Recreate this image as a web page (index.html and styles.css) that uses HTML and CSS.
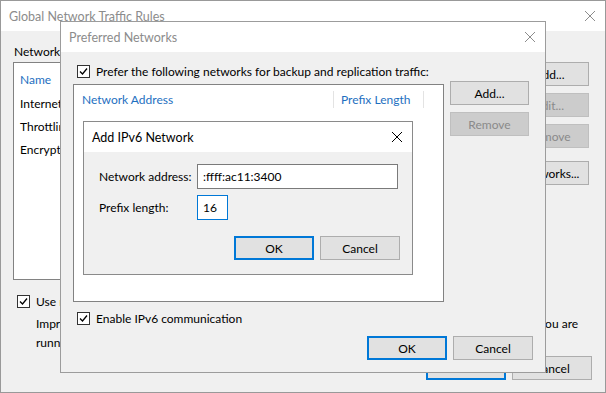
FILE: index.html
```html
<!DOCTYPE html>
<html lang="en">
<head>
    <meta charset="UTF-8">
    <title>Global Network Traffic Rules</title>
    <link rel="stylesheet" href="styles.css">
</head>
<body>
    <div class="desktop">

        <!-- Main window (inactive) -->
        <div class="window main-window">
            <div class="titlebar inactive">
                <span class="title">Global Network Traffic Rules</span>
                <svg class="close" width="10" height="10" viewBox="0 0 10 10"><path d="M0 0L10 10M10 0L0 10"/></svg>
            </div>
            <div class="window-body">
                <div class="main-row">
                    <div class="main-left">
                        <div class="label">Network traffic rules:</div>
                        <div class="listbox rules-list">
                            <div class="list-header">Name</div>
                            <div class="list-item">Internet</div>
                            <div class="list-item">Throttling</div>
                            <div class="list-item">Encryption</div>
                        </div>
                    </div>
                    <div class="side-buttons">
                        <button class="btn">Add...</button>
                        <button class="btn" disabled>Edit...</button>
                        <button class="btn" disabled>Remove</button>
                        <button class="btn spaced">Networks...</button>
                    </div>
                </div>
                <label class="check-row streams">
                    <span class="checkbox checked"><svg width="11" height="11" viewBox="0 0 11 11"><path d="M2 5.5L4.5 8L9 2.5"/></svg></span>
                    Use multiple upload streams per job
                </label>
                <p class="hint">Improves performance of data transfer over high latency WAN links. Keep this option enabled if you are<br>running backup jobs over WAN.</p>
                <div class="footer main-footer">
                    <button class="btn default">OK</button>
                    <button class="btn">Cancel</button>
                </div>
            </div>
        </div>

        <!-- Preferred Networks (inactive) -->
        <div class="window pref-window">
            <div class="titlebar inactive">
                <span class="title">Preferred Networks</span>
                <svg class="close" width="10" height="10" viewBox="0 0 10 10"><path d="M0 0L10 10M10 0L0 10"/></svg>
            </div>
            <div class="window-body pref-body">
                <label class="check-row">
                    <span class="checkbox checked"><svg width="11" height="11" viewBox="0 0 11 11"><path d="M2 5.5L4.5 8L9 2.5"/></svg></span>
                    Prefer the following networks for backup and replication traffic:
                </label>
                <div class="pref-row">
                    <div class="listbox net-list">
                        <div class="columns">
                            <div class="col col-address">Network Address</div>
                            <div class="col col-prefix">Prefix Length</div>
                        </div>
                    </div>
                    <div class="side-buttons pref-buttons">
                        <button class="btn">Add...</button>
                        <button class="btn" disabled>Remove</button>
                    </div>
                </div>
                <label class="check-row ipv6">
                    <span class="checkbox checked"><svg width="11" height="11" viewBox="0 0 11 11"><path d="M2 5.5L4.5 8L9 2.5"/></svg></span>
                    Enable IPv6 communication
                </label>
                <div class="footer">
                    <button class="btn default">OK</button>
                    <button class="btn">Cancel</button>
                </div>
            </div>
        </div>

        <!-- Add IPv6 Network (active) -->
        <div class="window add-window">
            <div class="titlebar">
                <span class="title">Add IPv6 Network</span>
                <svg class="close" width="10" height="10" viewBox="0 0 10 10"><path d="M0 0L10 10M10 0L0 10"/></svg>
            </div>
            <div class="window-body add-body">
                <div class="field">
                    <span class="field-label">Network address:</span>
                    <div class="input address">:ffff:ac11:3400</div>
                </div>
                <div class="field">
                    <span class="field-label">Prefix length:</span>
                    <div class="input prefix focused">16</div>
                </div>
                <div class="footer add-footer">
                    <button class="btn default">OK</button>
                    <button class="btn">Cancel</button>
                </div>
            </div>
        </div>

    </div>
</body>
</html>
```

FILE: styles.css
```css
* {
    margin: 0;
    padding: 0;
    box-sizing: border-box;
}

body {
    font-family: 'Segoe UI', Lato, 'Noto Sans', sans-serif;
    font-size: 12px;
    color: #000;
    background: #fff;
}

.desktop {
    position: relative;
    width: 606px;
    height: 393px;
    overflow: hidden;
}

/* windows */
.window {
    position: absolute;
    display: flex;
    flex-direction: column;
    background: #f0f0f0;
    border: 1px solid #999;
}

.main-window {
    left: 0;
    top: 0;
    width: 606px;
    height: 393px;
}

.pref-window {
    left: 60px;
    top: 21px;
    width: 486px;
    height: 352px;
    border-color: #9c9c9c;
}

.add-window {
    left: 83px;
    top: 121px;
    width: 330px;
    height: 154px;
    border-color: #8a8a8a;
}

.titlebar {
    height: 30px;
    flex: none;
    display: flex;
    align-items: center;
    justify-content: space-between;
    padding: 0 10px 0 8px;
    background: #fff;
    font-size: 12.5px;
}

.titlebar .close path {
    stroke: #000;
    stroke-width: 1;
    fill: none;
}

.titlebar.inactive .title {
    color: #8c8c8c;
}

.titlebar.inactive .close path {
    stroke: #8c8c8c;
}

.window-body {
    flex: 1;
    display: flex;
    flex-direction: column;
    padding: 13px 16px 12px 12px;
}

/* buttons */
.btn {
    width: 80px;
    height: 24px;
    font: inherit;
    color: #000;
    background: #e1e1e1;
    border: 1px solid #adadad;
}

.btn.default {
    border: 2px solid #0078d7;
}

.btn:disabled {
    background: #cccccc;
    border-color: #bfbfbf;
    color: #8a8a8a;
}

.footer {
    margin-top: auto;
    display: flex;
    justify-content: flex-end;
    gap: 6px;
}

/* checkboxes */
.check-row {
    display: flex;
    align-items: center;
    gap: 6px;
    height: 16px;
    padding-left: 4px;
}

.checkbox {
    width: 13px;
    height: 13px;
    border: 1px solid #333;
    background: #fff;
    display: flex;
    align-items: center;
    justify-content: center;
}

.checkbox path {
    stroke: #000;
    stroke-width: 1.3;
    fill: none;
}

/* list boxes */
.listbox {
    background: #fff;
    border: 1px solid #828282;
}

.list-header {
    color: #1e6fbf;
    height: 24px;
    line-height: 24px;
}

/* main window */
.main-row {
    display: flex;
    gap: 10px;
}

.main-left {
    flex: 1;
    display: flex;
    flex-direction: column;
}

.label {
    line-height: 16px;
    margin-left: 1px;
    margin-bottom: 2px;
}

.rules-list {
    height: 218px;
    padding: 5px 6px;
}

.list-item {
    height: 23px;
    line-height: 23px;
}

.side-buttons {
    display: flex;
    flex-direction: column;
    gap: 7px;
    padding-top: 18px;
}

.side-buttons .btn {
    width: 79px;
}

.side-buttons .spaced {
    margin-top: 6px;
}

.streams {
    margin-top: 13px;
}

.hint {
    margin-top: 5px;
    padding-left: 23px;
    line-height: 19px;
    white-space: nowrap;
}

.main-footer {
    margin-right: -3px;
}

/* preferred networks */
.pref-body {
    padding: 11px 12px 12px 12px;
}

.pref-body .check-row {
    padding-left: 4px;
}

.pref-row {
    display: flex;
    gap: 6px;
    margin-top: 2px;
}

.net-list {
    width: 371px;
    height: 218px;
    margin-top: 3px;
    padding-top: 6px;
}

.columns {
    display: flex;
    height: 17px;
    color: #1e6fbf;
}

.col {
    border-right: 1px solid #e3e3e3;
    line-height: 17px;
}

.col-address {
    width: 260px;
    padding-left: 8px;
}

.col-prefix {
    width: 90px;
    padding-left: 7px;
}

.pref-buttons {
    padding-top: 0;
}

.ipv6 {
    margin-top: 8px;
}

/* add ipv6 network */
.add-body {
    padding: 12px 12px 14px 15px;
}

.field {
    display: flex;
    align-items: center;
    margin-bottom: 6px;
}

.field-label {
    width: 98px;
}

.input {
    height: 25px;
    line-height: 23px;
    padding: 0 5px;
    background: #fff;
    border: 1px solid #7a7a7a;
}

.input.address {
    width: 201px;
}

.input.prefix {
    width: 31px;
}

.input.focused {
    border-color: #0078d7;
}
```
